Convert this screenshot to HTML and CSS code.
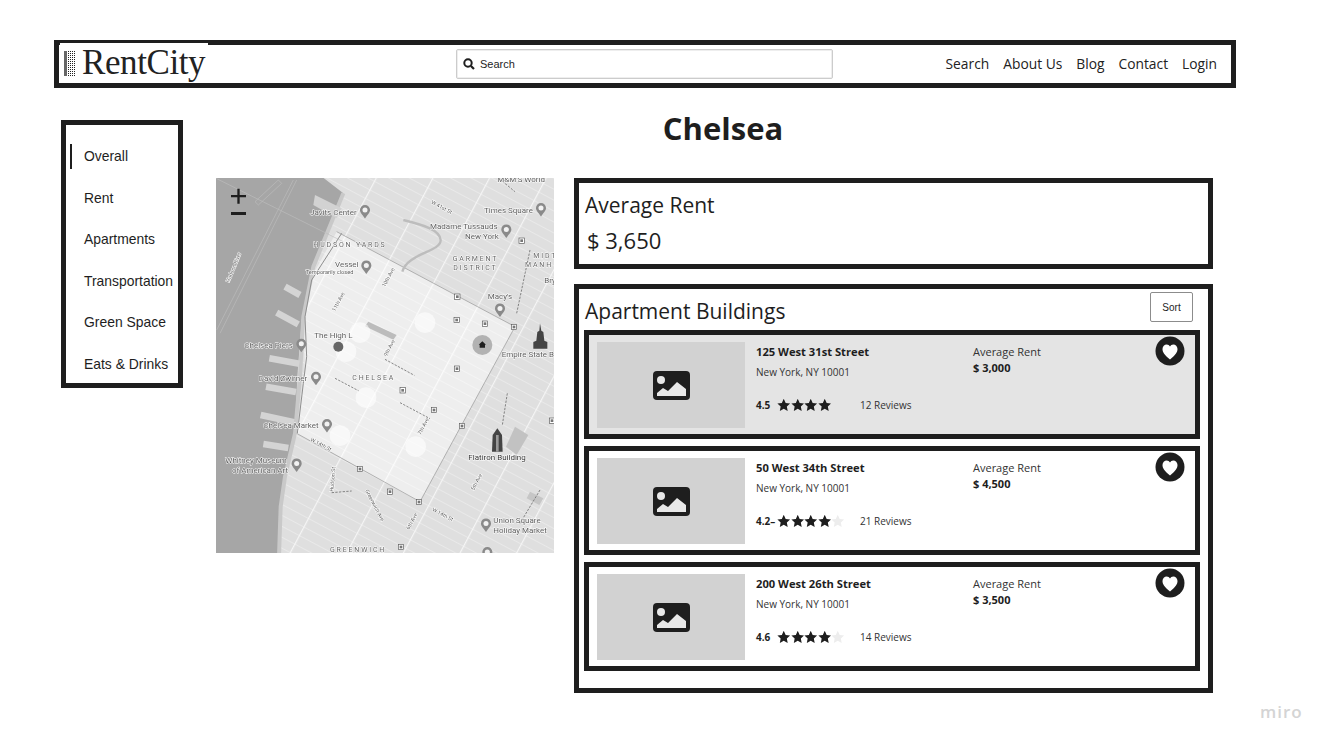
FILE: index.html
```html
<!DOCTYPE html>
<html lang="en">
<head>
    <title>RentCity - Chelsea</title>
    <meta charset="UTF-8">
    <link rel="stylesheet" href="styles.css">
</head>
<body>
    <svg class="defs" width="0" height="0">
        <symbol id="star" viewBox="0 0 24 24"><path d="M12 1l3.400 7.300 7.900 1-5.800 5.500 1.500 7.900-7-3.900-7 3.900 1.500-7.900L.7 9.300l7.900-1z"/></symbol>
        <symbol id="picture" viewBox="0 0 37 29">
            <rect width="37" height="29" rx="4" fill="#1e1e1e"/>
            <circle cx="8" cy="9" r="4" fill="#e8e8e8"/>
            <path d="M4 25v-3l6-5 5 3 9-9 9 7v7z" fill="#e8e8e8"/>
        </symbol>
        <symbol id="heart" viewBox="0 0 30 30">
            <circle cx="15" cy="15" r="14.500" fill="#1e1e1e"/>
            <path d="M15 23.500C9 18.500 7.500 16 7.500 13c0-2.500 2-4.500 4.200-4.500 1.500 0 2.600.7 3.300 2 .7-1.300 1.800-2 3.300-2 2.200 0 4.200 2 4.200 4.500 0 3-1.500 5.500-7.500 10.500z" fill="#fff"/>
        </symbol>
        <symbol id="stn" viewBox="0 0 18 18" overflow="visible">
            <rect x="1" y="1" width="16" height="16" fill="#fff" stroke="#5a5a5a" stroke-width="2"/>
            <rect x="5" y="5" width="8" height="8" fill="#777"/>
        </symbol>
        <symbol id="pin" viewBox="0 0 36 46">
            <path d="M18 45C8 31 2 25 2 18a16 16 0 0 1 32 0c0 7-6 13-16 27z" fill="#8a8a8a"/>
            <circle cx="18" cy="18" r="8" fill="#f2f2f2"/>
        </symbol>
        <pattern id="blocks" patternUnits="userSpaceOnUse" width="150" height="29" patternTransform="rotate(28)">
            <path d="M0 0H150" stroke="#fbfbfb" stroke-width="2.500"/>
            <path d="M0 0V29" stroke="#fbfbfb" stroke-width="7"/>
        </pattern>
        <pattern id="dots" patternUnits="userSpaceOnUse" width="2" height="2">
            <rect width="1" height="1" fill="#222"/>
        </pattern>
        <clipPath id="areaclip"><path d="M380 185L915 470 630 995 450 895 260 790 285 600 280 460 300 330z"/></clipPath>
    </svg>

    <div class="page">
        <header class="topbar">
            <a class="logo">
                <svg class="logo-mark" width="11" height="25"><rect width="11" height="25" fill="url(#dots)"/><rect width="3" height="25" fill="#666"/></svg>
                <span class="logo-text">RentCity</span>
            </a>
            <div class="searchbox">
                <svg width="12" height="12" viewBox="0 0 12 12"><circle cx="5" cy="5" r="3.700" fill="none" stroke="#1e1e1e" stroke-width="2"/><path d="M8 8l3 3" stroke="#1e1e1e" stroke-width="2.200"/></svg>
                <span>Search</span>
            </div>
            <nav class="topnav">
                <a>Search</a>
                <a>About Us</a>
                <a>Blog</a>
                <a>Contact</a>
                <a>Login</a>
            </nav>
        </header>

        <div class="body-row">
            <ul class="sidenav">
                <li class="active">Overall</li>
                <li>Rent</li>
                <li>Apartments</li>
                <li>Transportation</li>
                <li>Green Space</li>
                <li>Eats &amp; Drinks</li>
            </ul>

            <main class="content">
                <h1 class="title">Chelsea</h1>
                <div class="columns">
                    <svg class="map" width="338" height="375" viewBox="0 0 338 375">
                        <g transform="translate(-6,-8) scale(.33333)">
                            <rect x="0" y="0" width="1100" height="1200" fill="#dfdfdf"/>
                            <rect x="0" y="0" width="1100" height="1200" fill="url(#blocks)" opacity=".8"/>

                            <!-- chelsea overlay -->
                            <path class="area" d="M380 185L915 470 630 995 450 895 260 790 285 600 280 460 300 330z"/>
                            <rect x="0" y="0" width="1100" height="1200" fill="url(#blocks)" clip-path="url(#areaclip)"/>
                            <path d="M380 185L915 470 630 995 260 790" fill="none" stroke="#777" stroke-width="1.500"/>

                            <!-- river and piers -->
                            <path class="water" d="M0 0H310L400 70 340 210 300 320 275 450 262 620 255 790 225 920 212 1010 205 1160H0z"/>
                            <path class="shore" d="M400 70L310 290 280 440 270 620 255 790 225 920 212 1010 207 1160"/>
                            <path class="shore-line" d="M395 190L305 330 285 440 290 560 280 640 262 790"/>
                            <path class="rail" d="M18 25L400 215M135 95L205 30 215 40 145 105zM20 480L250 30M30 490L260 30"/>
                            <g class="piers">
                                <path d="M225 350l45 25M200 428l65 35M178 565l90 16M168 650l90 16M152 735l100 22M160 822l75 12"/>
                            </g>
                            <path d="M315 75l80 40-15 30-70-40z" fill="#d2d2d2"/>

                            <!-- parks and blocks -->
                            <path d="M475 455l85 40-10 14-85-40z" fill="#bcbcbc"/>
                            <path d="M915 770l40 25-35 60-32-25z" fill="#c2c2c2"/>
                            <path d="M960 965l40 20-12 20-38-20z" fill="#c6c6c6"/>
                            <path d="M580 150c60 15 110 30 112 60 2 35-100 40-115 95" fill="none" stroke="#bdbdbd" stroke-width="7"/>

                            <!-- subway dashes -->
                            <g class="dash">
                                <path d="M525 568l88 48M375 625l72 38M570 698l90 48M365 968l60-5"/>
                                <path d="M960 240l-40 190M892 670l-15 95M990 960l-60 100"/>
                                <path d="M860 20l55 45"/>
                            </g>

                            <!-- halos -->
                            <g fill="#fff" opacity=".6">
                                <circle cx="645" cy="458" r="31"/>
                                <circle cx="450" cy="488" r="31"/>
                                <circle cx="408" cy="545" r="31"/>
                                <circle cx="468" cy="683" r="31"/>
                                <circle cx="390" cy="797" r="31"/>
                                <circle cx="617" cy="830" r="31"/>
                            </g>
                            <circle cx="817" cy="525" r="30" fill="#b2b2b2"/>
                            <path d="M817 514l11 10h-3v9h-16v-9h-3z" fill="#1e1e1e"/>

                            <!-- stations -->
                            <use href="#stn" x="733" y="371" width="18" height="18"/>
                            <use href="#stn" x="731" y="441" width="18" height="18"/>
                            <use href="#stn" x="816" y="452" width="18" height="18"/>
                            <use href="#stn" x="903" y="462" width="18" height="18"/>
                            <use href="#stn" x="732" y="587" width="18" height="18"/>
                            <use href="#stn" x="569" y="652" width="18" height="18"/>
                            <use href="#stn" x="663" y="711" width="18" height="18"/>
                            <use href="#stn" x="747" y="759" width="18" height="18"/>
                            <use href="#stn" x="441" y="888" width="18" height="18"/>
                            <use href="#stn" x="531" y="956" width="18" height="18"/>
                            <use href="#stn" x="618" y="987" width="18" height="18"/>
                            <use href="#stn" x="926" y="203" width="18" height="18"/>
                            <use href="#stn" x="564" y="1122" width="18" height="18"/>
                            <use href="#stn" x="1017" y="743" width="18" height="18"/>

                            <!-- pins -->
                            <use href="#pin" x="448" y="102" width="34" height="46"/>
                            <use href="#pin" x="452" y="268" width="34" height="46"/>
                            <use href="#pin" x="853" y="397" width="34" height="46"/>
                            <use href="#pin" x="872" y="160" width="34" height="46"/>
                            <use href="#pin" x="976" y="96" width="34" height="46"/>
                            <use href="#pin" x="257" y="503" width="34" height="46"/>
                            <use href="#pin" x="301" y="602" width="34" height="46"/>
                            <use href="#pin" x="334" y="744" width="34" height="46"/>
                            <use href="#pin" x="243" y="862" width="34" height="46"/>
                            <use href="#pin" x="811" y="1042" width="34" height="46"/>
                            <use href="#pin" x="815" y="1128" width="34" height="46"/>
                            <circle cx="385" cy="530" r="15" fill="#666"/>

                            <!-- landmarks -->
                            <path d="M990 460l4 22 6 4 3 26 9 4v20h-42v-20l9-4 3-26 6-4z" fill="#444"/>
                            <path d="M862 775l14 20 2 50h-32l2-50z" fill="#444"/>
                            <path d="M858 795h8v50h-8z" fill="#9a9a9a"/>

                            <!-- labels -->
                            <text class="lb" x="300" y="135">Javits Center</text>
                            <text class="lb" x="822" y="129">Times Square</text>
                            <text class="lb" x="660" y="178">Madame Tussauds</text>
                            <text class="lb" x="765" y="206">New York</text>
                            <text class="lb" x="375" y="291">Vessel</text>
                            <text class="lb sm" x="287" y="312">Temporarily closed</text>
                            <text class="lb" x="833" y="387">Macy's</text>
                            <text class="lb" x="313" y="503">The High L</text>
                            <text class="lb" x="103" y="535">Chelsea Piers</text>
                            <text class="lb" x="146" y="633">David Zwirner</text>
                            <text class="lb" x="160" y="775">Chelsea Market</text>
                            <text class="lb" x="46" y="880">Whitney Museum</text>
                            <text class="lb" x="66" y="908">of American Art</text>
                            <text class="lb" x="875" y="562">Empire State B</text>
                            <text class="lb dark" x="775" y="870">Flatiron Building</text>
                            <text class="lb" x="850" y="1060">Union Square</text>
                            <text class="lb" x="850" y="1088">Holiday Market</text>
                            <text class="lb" x="862" y="36">M&amp;M'S World</text>
                            <text class="lb" x="1003" y="340">Bry</text>
                            <text class="dist" x="310" y="231">HUDSON YARDS</text>
                            <text class="dist" x="728" y="273">GARMENT</text>
                            <text class="dist" x="730" y="301">DISTRICT</text>
                            <text class="dist" x="970" y="263">MIDT</text>
                            <text class="dist" x="945" y="291">MANH</text>
                            <text class="dist" x="427" y="630">CHELSEA</text>
                            <text class="dist" x="360" y="1147">GREENWICH</text>
                            <text class="rd" transform="translate(58,338) rotate(-68)">Hudson River</text>
                            <text class="rd" transform="translate(662,100) rotate(28)">W 41st St</text>
                            <text class="rd" transform="translate(375,425) rotate(-62)">11th Ave</text>
                            <text class="rd" transform="translate(525,352) rotate(-62)">10th Ave</text>
                            <text class="rd" transform="translate(530,560) rotate(-62)">9th Ave</text>
                            <text class="rd" transform="translate(632,795) rotate(-62)">7th Ave</text>
                            <text class="rd" transform="translate(792,962) rotate(-62)">5th Ave</text>
                            <text class="rd" transform="translate(598,1080) rotate(-62)">6th Ave</text>
                            <text class="rd" transform="translate(300,812) rotate(28)">W 14th St</text>
                            <text class="rd" transform="translate(665,1022) rotate(28)">W 14th St</text>
                            <text class="rd" transform="translate(370,965) rotate(-85)">Hudson St</text>
                            <text class="rd" transform="translate(465,962) rotate(62)">Greenwich Ave</text>

                            <!-- zoom buttons -->
                            <path d="M63 75h45v7H63zM82 56h7v45h-7zM63 126h45v9H63z" fill="#1e1e1e"/>
                        </g>
                    </svg>

                    <div class="panels">
                        <section class="panel rent-panel">
                            <h2>Average Rent</h2>
                            <p class="rent-amount">$ 3,650</p>
                        </section>

                        <section class="panel list-panel">
                            <div class="list-head">
                                <h2>Apartment Buildings</h2>
                                <button class="sort">Sort</button>
                            </div>
                            <div class="cards">
                                <article class="card selected">
                                    <div class="thumb"><svg width="37" height="29"><use href="#picture"/></svg></div>
                                    <div class="info">
                                        <h3>125 West 31st Street</h3>
                                        <p class="addr">New York, NY 10001</p>
                                        <div class="rating">
                                            <b>4.5</b>
                                            <span class="stars">
                                                <svg><use href="#star"/></svg><svg><use href="#star"/></svg><svg><use href="#star"/></svg><svg><use href="#star"/></svg>
                                            </span>
                                            <span class="reviews">12 Reviews</span>
                                        </div>
                                    </div>
                                    <div class="avg">
                                        <span>Average Rent</span>
                                        <b>$ 3,000</b>
                                    </div>
                                    <svg class="fav" width="30" height="30"><use href="#heart"/></svg>
                                </article>

                                <article class="card">
                                    <div class="thumb"><svg width="37" height="29"><use href="#picture"/></svg></div>
                                    <div class="info">
                                        <h3>50 West 34th Street</h3>
                                        <p class="addr">New York, NY 10001</p>
                                        <div class="rating">
                                            <b>4.2&#8211;</b>
                                            <span class="stars">
                                                <svg><use href="#star"/></svg><svg><use href="#star"/></svg><svg><use href="#star"/></svg><svg><use href="#star"/></svg><svg class="off"><use href="#star"/></svg>
                                            </span>
                                            <span class="reviews">21 Reviews</span>
                                        </div>
                                    </div>
                                    <div class="avg">
                                        <span>Average Rent</span>
                                        <b>$ 4,500</b>
                                    </div>
                                    <svg class="fav" width="30" height="30"><use href="#heart"/></svg>
                                </article>

                                <article class="card">
                                    <div class="thumb"><svg width="37" height="29"><use href="#picture"/></svg></div>
                                    <div class="info">
                                        <h3>200 West 26th Street</h3>
                                        <p class="addr">New York, NY 10001</p>
                                        <div class="rating">
                                            <b>4.6</b>
                                            <span class="stars">
                                                <svg><use href="#star"/></svg><svg><use href="#star"/></svg><svg><use href="#star"/></svg><svg><use href="#star"/></svg><svg class="off"><use href="#star"/></svg>
                                            </span>
                                            <span class="reviews">14 Reviews</span>
                                        </div>
                                    </div>
                                    <div class="avg">
                                        <span>Average Rent</span>
                                        <b>$ 3,500</b>
                                    </div>
                                    <svg class="fav" width="30" height="30"><use href="#heart"/></svg>
                                </article>
                            </div>
                        </section>
                    </div>
                </div>
            </main>
        </div>
    </div>

    <div class="miro">miro</div>
</body>
</html>
```

FILE: styles.css
```css
* {
    box-sizing: border-box;
}
html, body {
    margin: 0;
    height: 100%;
    overflow: hidden;
}
body {
    background: #fff;
    color: #1e1e1e;
    font-family: "Open Sans", "Liberation Sans", sans-serif;
    position: relative;
}
h1, h2, h3, p, ul {
    margin: 0;
    padding: 0;
}
.defs {
    position: absolute;
}
.page {
    width: 1236px;
    margin-left: 54px;
    padding-top: 40px;
}

/* top bar */
.topbar {
    height: 48px;
    width: 1182px;
    border: 5px solid #1e1e1e;
    display: flex;
    align-items: center;
}
.logo {
    width: 148px;
    height: 40px;
    margin-left: 1px;
    margin-top: -2px;
    padding-left: 4px;
    background: #fff;
    display: flex;
    align-items: center;
    flex-shrink: 0;
}
.logo-mark {
    flex-shrink: 0;
}
.logo-text {
    font-family: "Liberation Serif", serif;
    font-size: 35px;
    letter-spacing: -.4px;
    margin-left: 7px;
    color: #222;
}
.searchbox {
    width: 377px;
    height: 30px;
    margin-left: 248px;
    border: 1px solid #ccc;
    border-radius: 2px;
    box-shadow: inset 0 0 0 1px #eee;
    display: flex;
    align-items: center;
    gap: 5px;
    padding-left: 6px;
    font-family: "Liberation Sans", sans-serif;
    font-size: 11px;
}
.topnav {
    margin-left: auto;
    margin-right: 14px;
    margin-top: -2px;
    display: flex;
    gap: 14px;
    font-size: 13.800px;
    color: #222;
}

/* left menu + content */
.body-row {
    display: flex;
    align-items: flex-start;
}
.sidenav {
    list-style: none;
    width: 122px;
    height: 268px;
    margin: 32px 0 0 7px;
    border: 5px solid #1e1e1e;
    padding: 19px 0 0 18px;
    font-family: "Liberation Sans", sans-serif;
    font-size: 13.900px;
    flex-shrink: 0;
    white-space: nowrap;
}
.sidenav li {
    height: 41.600px;
    line-height: 24px;
    position: relative;
}
.sidenav li.active::before {
    content: "";
    position: absolute;
    left: -14px;
    top: 0;
    height: 25px;
    border-left: 2px solid #1e1e1e;
}
.content {
    width: 1014px;
    margin-left: 33px;
    padding-top: 20px;
}
.title {
    font-size: 31px;
    line-height: 40px;
    font-weight: 700;
    text-align: center;
    height: 70px;
}
.columns {
    display: flex;
    gap: 20px;
    align-items: flex-start;
}

/* map */
.map {
    flex-shrink: 0;
    display: block;
    filter: blur(.35px);
}
.area {
    fill: #eeeeee;
}
.water {
    fill: #a6a6a6;
}
.shore {
    fill: none;
    stroke: #c9c9c9;
    stroke-width: 12;
}
.shore-line {
    fill: none;
    stroke: #8e8e8e;
    stroke-width: 3;
}
.rail {
    fill: none;
    stroke: #bcbcbc;
    stroke-width: 2;
}
.piers {
    fill: none;
    stroke: #d4d4d4;
    stroke-width: 20;
}
.dash {
    fill: none;
    stroke: #707070;
    stroke-width: 2.500;
    stroke-dasharray: 7 4;
}
.lb, .dist, .rd {
    font-family: "Roboto", "Liberation Sans", sans-serif;
    fill: #5e5e5e;
    stroke: #fff;
    stroke-width: 3;
    paint-order: stroke;
}
.lb {
    font-size: 24px;
}
.lb.sm {
    font-size: 17px;
}
.lb.dark {
    fill: #333;
}
.dist {
    font-size: 21px;
    letter-spacing: 5.500px;
    fill: #666;
}
.rd {
    font-size: 16px;
    fill: #666;
}

/* right side */
.panels {
    width: 639px;
    display: flex;
    flex-direction: column;
    gap: 15px;
}
.panel {
    border: 5px solid #1e1e1e;
}
.panel h2 {
    font-size: 21px;
    font-weight: 400;
    line-height: 30px;
}
.rent-panel {
    height: 91px;
    padding: 7px 0 0 6px;
}
.rent-amount {
    font-size: 22px;
    line-height: 30px;
    margin: 5px 0 0 2px;
}
.list-panel {
    height: 409px;
    padding: 0 8px 0 5px;
}
.list-head {
    height: 41px;
    display: flex;
    justify-content: space-between;
    padding: 3px 7px 0 1px;
}
.list-head h2 {
    margin-top: 4px;
}
.sort {
    width: 43px;
    height: 30px;
    background: #fff;
    border: 1px solid #8c8c8c;
    border-radius: 2px;
    font-family: "Liberation Sans", sans-serif;
    font-size: 10px;
    color: #1e1e1e;
    padding: 0;
}
.cards {
    display: flex;
    flex-direction: column;
    gap: 7px;
}
.card {
    height: 109px;
    border: 5px solid #1e1e1e;
    display: flex;
    padding: 7px 0 0 8px;
    position: relative;
}
.card.selected {
    background: #e4e4e4;
}
.thumb {
    width: 148px;
    height: 86px;
    background: #d2d2d2;
    display: flex;
    align-items: center;
    justify-content: center;
    flex-shrink: 0;
}
.thumb svg {
    display: block;
}
.info {
    width: 217px;
    margin-left: 11px;
    font-size: 10px;
}
.info h3 {
    font-size: 11.200px;
    font-weight: 700;
    line-height: 16px;
    margin-top: 2px;
}
.addr {
    line-height: 14px;
    margin-top: 5px;
    color: #333;
}
.rating {
    display: flex;
    align-items: center;
    margin-top: 19px;
    height: 14px;
}
.rating b {
    width: 21px;
    flex-shrink: 0;
}
.stars {
    display: flex;
    width: 83px;
    flex-shrink: 0;
}
.stars svg {
    width: 13.500px;
    height: 14px;
    fill: #1e1e1e;
}
.stars svg.off {
    fill: #ededed;
}
.reviews {
    color: #333;
}
.avg {
    display: flex;
    flex-direction: column;
    font-size: 11px;
    line-height: 16px;
    margin-top: 2px;
    color: #333;
}
.avg b {
    color: #1e1e1e;
    font-size: 11px;
}
.fav {
    margin-left: auto;
    margin-right: 10px;
    margin-top: -6px;
}
.miro {
    position: absolute;
    left: 1260px;
    top: 700px;
    font-size: 17px;
    font-weight: 600;
    letter-spacing: 1px;
    color: #d4d4d4;
}
```
